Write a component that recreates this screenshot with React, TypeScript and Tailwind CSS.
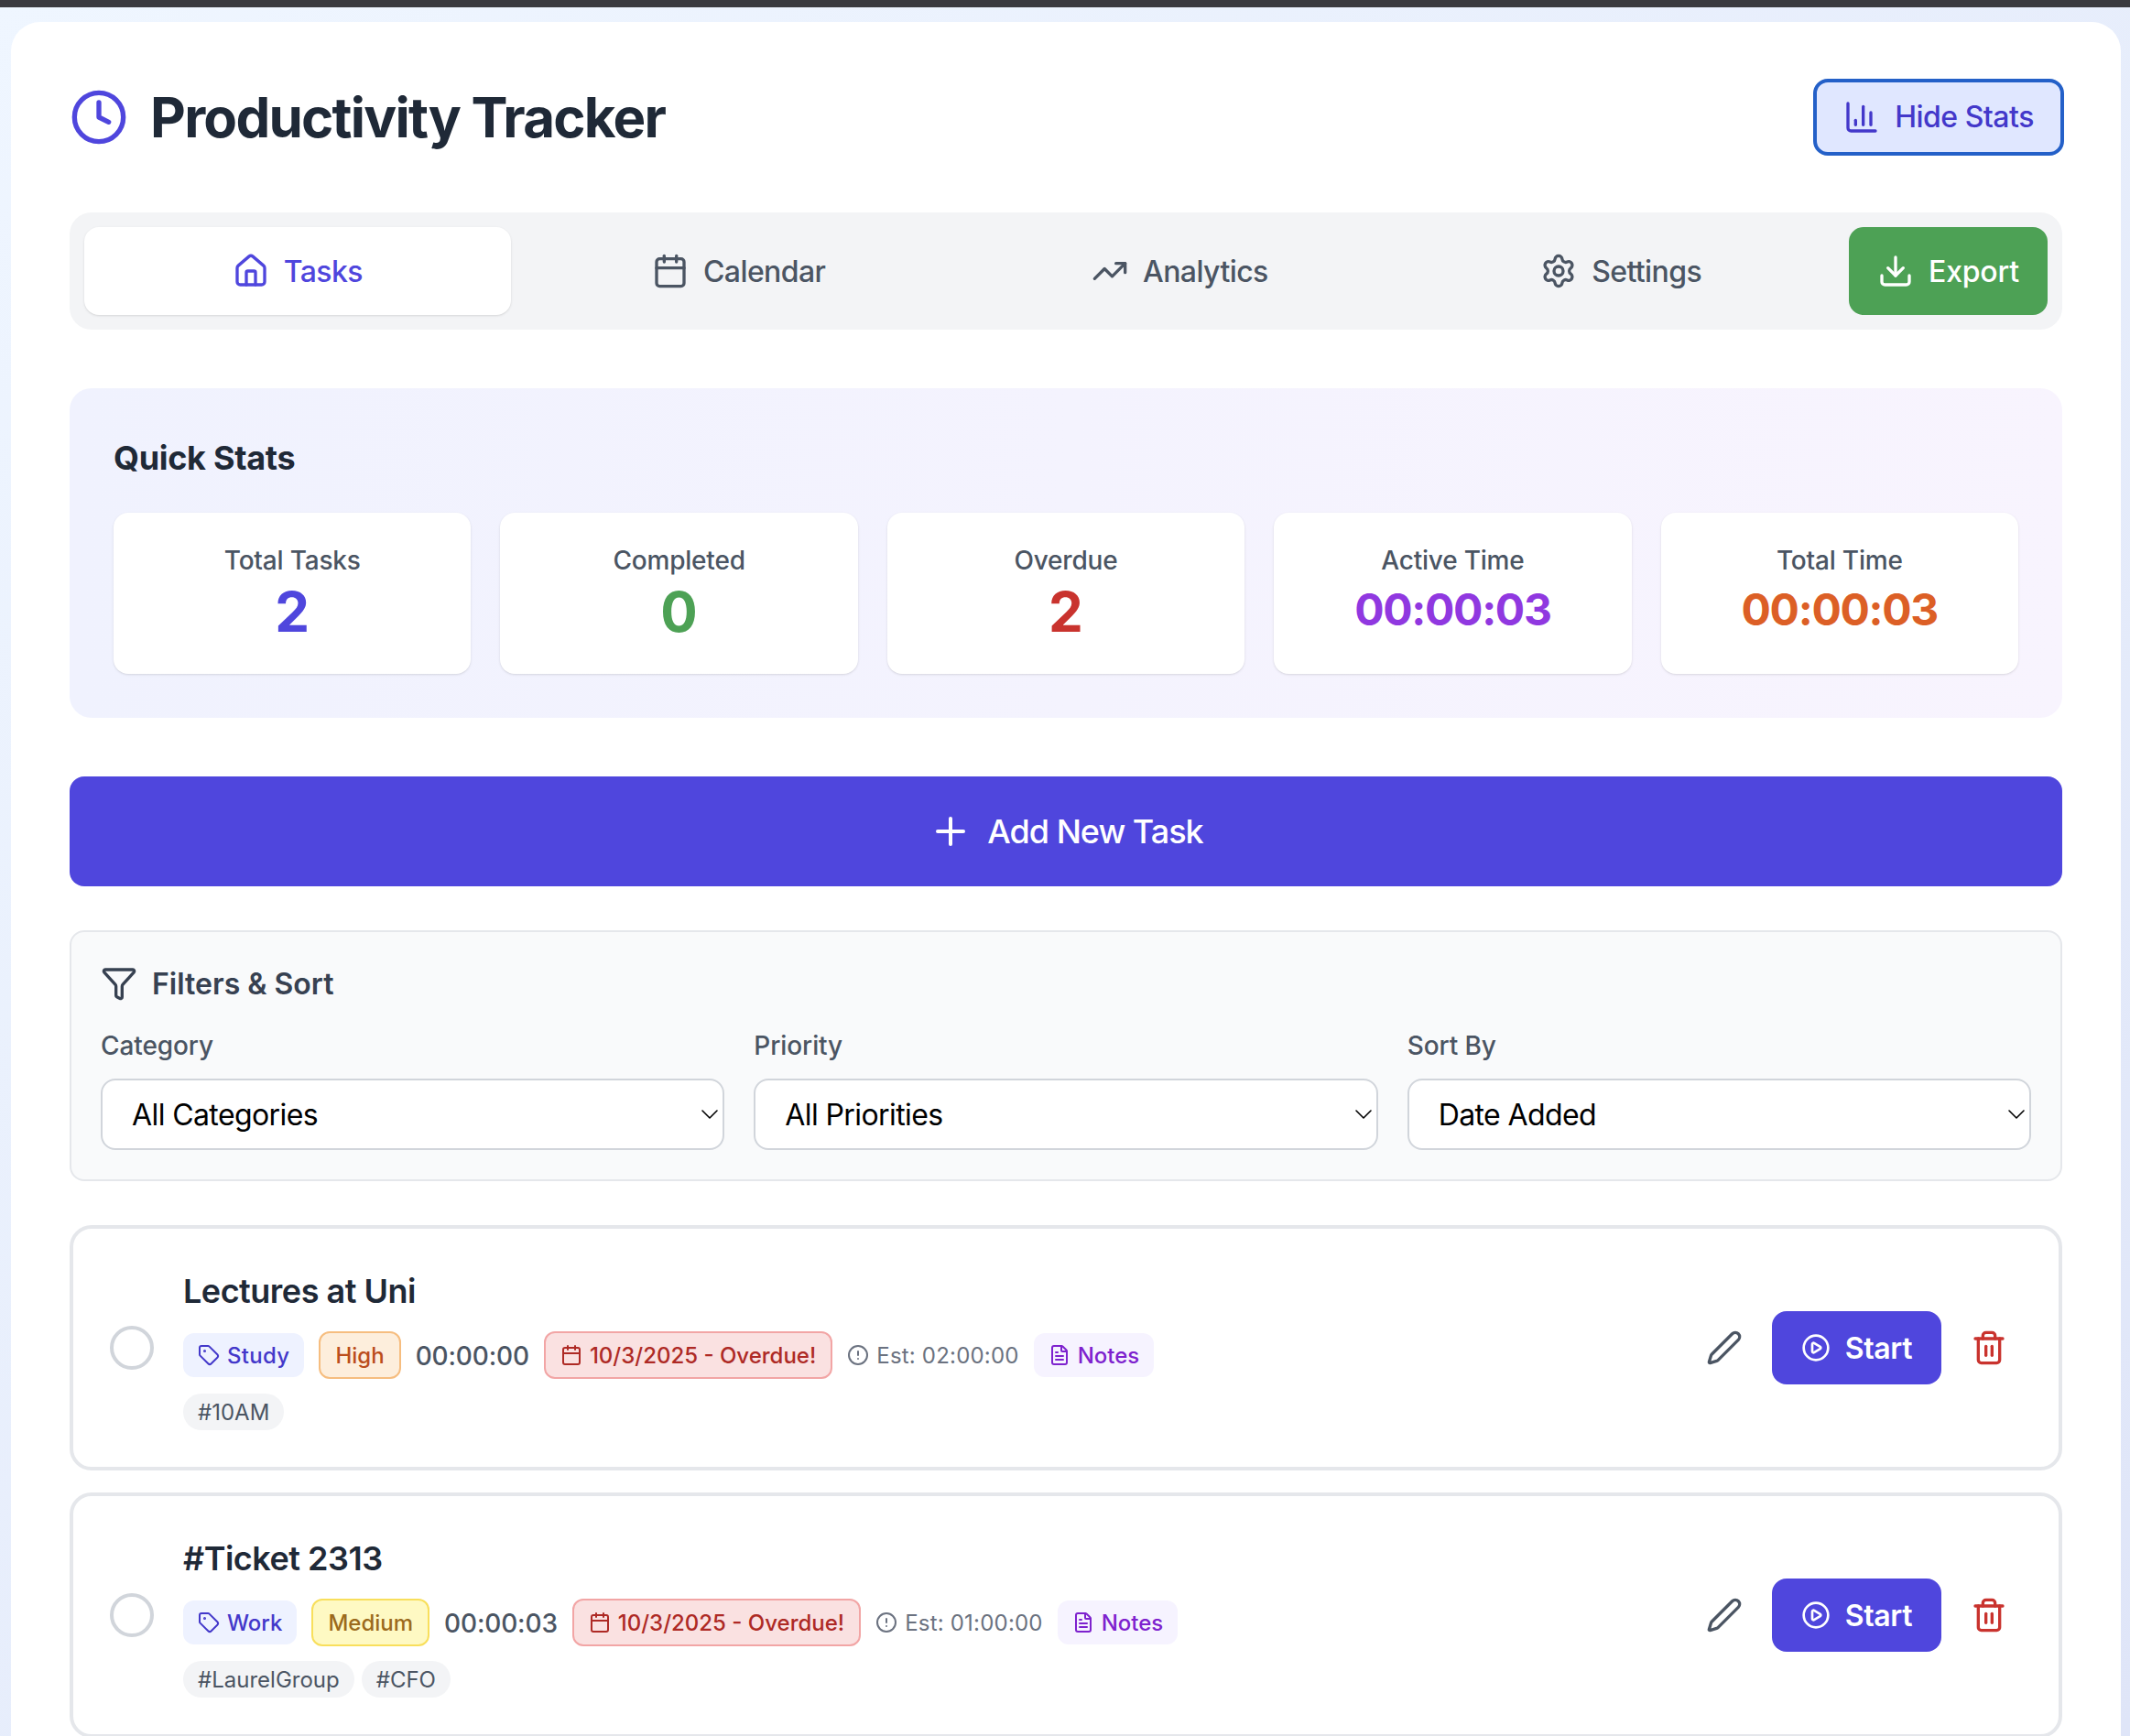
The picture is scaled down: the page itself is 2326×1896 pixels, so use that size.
import React from "react";
import {
  Clock, ChartColumn, House, Calendar, TrendingUp, Settings, Download, Plus, Funnel,
  Tag, CircleAlert, FileText, Pen, CirclePlay, Trash2, ChevronDown,
} from "lucide-react";

const tabs = [
  { label: "Tasks", Icon: House, active: true },
  { label: "Calendar", Icon: Calendar, active: false },
  { label: "Analytics", Icon: TrendingUp, active: false },
  { label: "Settings", Icon: Settings, active: false },
];

const stats = [
  { label: "Total Tasks", value: "2", color: "text-[#4f46dd]", big: true },
  { label: "Completed", value: "0", color: "text-[#4da155]", big: true },
  { label: "Overdue", value: "2", color: "text-[#c9332e]", big: true },
  { label: "Active Time", value: "00:00:03", color: "text-[#9038e0]", big: false },
  { label: "Total Time", value: "00:00:03", color: "text-[#dc5f26]", big: false },
];

const filters = [
  { label: "Category", value: "All Categories" },
  { label: "Priority", value: "All Priorities" },
  { label: "Sort By", value: "Date Added" },
];

const tasks = [
  {
    title: "Lectures at Uni", category: "Study", priority: "High",
    categoryClass: "tracking-[0.3px]",
    priorityClass: "bg-[#fdeedc] border-[#f6bd7f] text-[#bb4d1c]",
    time: "00:00:00", est: "Est: 02:00:00", tags: ["#10AM"],
  },
  {
    title: "#Ticket 2313", category: "Work", priority: "Medium",
    categoryClass: "",
    priorityClass: "bg-[#fef9c3] border-[#f8df5c] text-[#9c6a1c]",
    time: "00:00:03", est: "Est: 01:00:00", tags: ["#LaurelGroup", "#CFO"],
  },
];

function TaskCard({ t }: { t: (typeof tasks)[number] }) {
  return (
    <div className="mb-6 flex items-center gap-8 rounded-3xl border-4 border-[#e5e7eb] bg-white p-10">
      <div className="h-12 w-12 shrink-0 rounded-full border-4 border-[#d1d5db]" />
      <div className="min-w-0 flex-1">
        <h3 className="text-[36px] leading-[56px] font-semibold tracking-[-0.5px] text-[#1f2937]">{t.title}</h3>
        <div className="mt-4 flex h-[52px] items-center gap-4">
          <span className={`flex h-12 items-center gap-2 rounded-xl bg-[#eef2ff] px-4 text-[24px] font-medium text-[#4338ca] ${t.categoryClass}`}>
            <Tag size={24} />
            <span className="pt-[2px]">{t.category}</span>
          </span>
          <span className={`flex h-[52px] items-center rounded-xl border-2 px-4 pt-[2px] text-[24px] font-medium ${t.priorityClass}`}>
            {t.priority}
          </span>
          <span className="pt-[2px] text-[28px] font-medium tracking-[-0.15px] text-[#4b5563]">{t.time}</span>
          <span className="flex h-[52px] items-center gap-2 rounded-xl border-2 border-[#f2a5a5] bg-[#fae1e1] px-4 text-[24px] font-medium text-[#ae2a25]">
            <Calendar size={24} />
            <span className="pt-[2px]">10/3/2025 - Overdue!</span>
          </span>
          <span className="flex items-center gap-2 text-[24px] tracking-[0.2px] text-[#6b7280]">
            <CircleAlert size={24} />
            <span className="pt-[2px]">{t.est}</span>
          </span>
          <span className="flex h-12 items-center gap-2 rounded-xl bg-[#f6f3ff] px-4 text-[24px] font-medium text-[#7e22ce]">
            <FileText size={24} />
            <span className="pt-[2px]">Notes</span>
          </span>
        </div>
        <div className="mt-4 flex gap-2">
          {t.tags.map((g) => (
            <span key={g} className="flex h-10 items-center rounded-full bg-[#f3f4f6] px-4 pt-[2px] text-[24px] text-[#4b5563]">
              {g}
            </span>
          ))}
        </div>
      </div>
      <div className="flex shrink-0 items-center gap-4">
        <button className="p-4 text-[#4b5563]"><Pen size={40} strokeWidth={2} /></button>
        <button className="flex h-20 w-[185px] items-center justify-center gap-4 rounded-2xl bg-[#4f46dd] text-[32px] font-semibold tracking-[-0.3px] text-white">
          <CirclePlay size={32} />
          <span className="pt-[2px]">Start</span>
        </button>
        <button className="p-4 text-[#c9332e]"><Trash2 size={40} strokeWidth={2} /></button>
      </div>
    </div>
  );
}

export default function App() {
  return (
    <div className="h-[1896px] overflow-hidden bg-gradient-to-br from-[#eff6ff] to-[#dfe5f8] font-['Inter',sans-serif]">
      <div className="h-2 bg-[#3a3a3f]" />
      <div className="mt-4 mr-2.5 ml-3 rounded-[32px] bg-white p-16">
        <div className="mb-16 flex h-20 items-center justify-between">
          <div className="flex items-center gap-6">
            <Clock size={64} className="text-[#4f46dd]" strokeWidth={2} />
            <h1 className="text-[60px] font-bold tracking-[-1.75px] text-[#1f2937]">Productivity Tracker</h1>
          </div>
          <button className="-mr-[2px] flex h-[84px] w-[274px] items-center justify-center gap-4 rounded-2xl border-4 border-[#2460c8] bg-[#e0e7ff] text-[32px] font-medium tracking-[-0.5px] text-[#4338ca]">
            <ChartColumn size={40} />
            Hide Stats
          </button>
        </div>

        <div className="mb-16 flex gap-4 rounded-3xl bg-[#f3f4f6] p-4">
          {tabs.map(({ label, Icon, active }) => (
            <button
              key={label}
              className={`flex h-24 flex-1 items-center justify-center gap-4 rounded-2xl text-[32px] font-medium tracking-[-0.6px] ${
                active ? "bg-white text-[#4f46dd] shadow-sm" : "text-[#4b5563]"
              }`}
            >
              <Icon size={40} />
              <span className="pt-[2px]">{label}</span>
            </button>
          ))}
          <button className="flex h-24 w-[217px] items-center justify-center gap-4 rounded-2xl bg-[#4da155] text-[32px] font-medium tracking-[-0.2px] text-white">
            <Download size={40} />
            <span className="pt-[2px]">Export</span>
          </button>
        </div>

        <div className="mb-16 rounded-3xl bg-gradient-to-r from-[#f0f2fe] to-[#f8f4fe] p-12">
          <h2 className="mb-8 text-[36px] leading-[56px] font-bold tracking-[-0.3px] text-[#1f2937]">Quick Stats</h2>
          <div className="grid grid-cols-5 gap-8">
            {stats.map((s) => (
              <div key={s.label} className="h-44 rounded-2xl bg-white p-8 text-center shadow-sm">
                <div className="text-[28px] leading-10 font-medium tracking-[-0.2px] text-[#4b5563]">{s.label}</div>
                <div className={`font-bold ${s.color} ${s.big ? "text-[60px] leading-[72px]" : "pt-[2px] text-[48px] leading-[64px] tracking-[-1.3px]"}`}>
                  {s.value}
                </div>
              </div>
            ))}
          </div>
        </div>

        <button className="mb-12 flex h-[120px] w-full items-center justify-center gap-4 rounded-2xl bg-[#4f46dd] text-[36px] font-medium tracking-[-1px] text-white">
          <Plus size={48} />
          Add New Task
        </button>

        <div className="mb-12 rounded-2xl border-2 border-[#e5e7eb] bg-[#f9fafb] p-8">
          <div className="mb-6 flex h-12 items-center gap-4 text-[32px] font-semibold text-[#374151]">
            <Funnel size={40} />
            <span className="pt-[2px]">Filters &amp; Sort</span>
          </div>
          <div className="grid grid-cols-3 gap-8">
            {filters.map((f) => (
              <div key={f.label}>
                <div className="mb-4 text-[28px] leading-10 font-medium tracking-[-0.1px] text-[#4b5563]">{f.label}</div>
                <div className="relative">
                  <select className="h-[78px] w-full appearance-none rounded-2xl border-2 border-[#d1d5db] bg-white px-8 pt-[2px] text-[32px] tracking-[-0.6px] text-black">
                    <option>{f.value}</option>
                  </select>
                  <ChevronDown size={32} strokeWidth={1.2} className="absolute top-[23px] right-0 text-black" />
                </div>
              </div>
            ))}
          </div>
        </div>

        {tasks.map((t) => (
          <TaskCard key={t.title} t={t} />
        ))}
      </div>
    </div>
  );
}
